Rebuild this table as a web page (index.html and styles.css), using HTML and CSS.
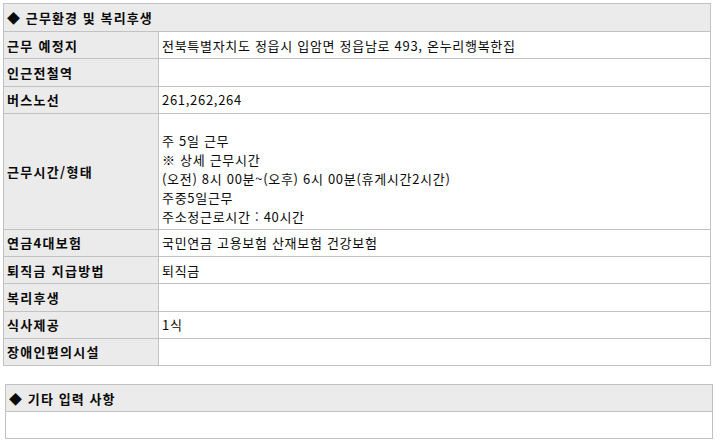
FILE: index.html
```html
<!DOCTYPE html>
<html lang="ko">
<head>
<meta charset="utf-8">
<title>근무환경 및 복리후생</title>
<link rel="stylesheet" href="styles.css">
</head>
<body>
<div class="page">
  <table class="info">
    <colgroup>
      <col class="col-label">
      <col class="col-value">
    </colgroup>
    <thead>
      <tr><th class="title" colspan="2">◆ 근무환경 및 복리후생</th></tr>
    </thead>
    <tbody>
      <tr><th class="label">근무 예정지</th><td class="value">전북특별자치도 정읍시 입암면 정읍남로 493, 온누리행복한집</td></tr>
      <tr><th class="label">인근전철역</th><td class="value"></td></tr>
      <tr><th class="label">버스노선</th><td class="value">261,262,264</td></tr>
      <tr class="tall"><th class="label">근무시간/형태</th><td class="value multi">주 5일 근무<br>※ 상세 근무시간<br>(오전) 8시 00분~(오후) 6시 00분(휴게시간2시간)<br>주중5일근무<br>주소정근로시간 : 40시간</td></tr>
      <tr><th class="label">연금4대보험</th><td class="value">국민연금 고용보험 산재보험 건강보험</td></tr>
      <tr><th class="label">퇴직금 지급방법</th><td class="value">퇴직금</td></tr>
      <tr><th class="label">복리후생</th><td class="value"></td></tr>
      <tr><th class="label">식사제공</th><td class="value">1식</td></tr>
      <tr><th class="label">장애인편의시설</th><td class="value"></td></tr>
    </tbody>
  </table>

  <table class="info extra">
    <thead>
      <tr><th class="title">◆ 기타 입력 사항</th></tr>
    </thead>
    <tbody>
      <tr><td class="value"></td></tr>
    </tbody>
  </table>
</div>
</body>
</html>
```

FILE: styles.css
```css
html, body {
  margin: 0;
  padding: 0;
  background: #ffffff;
}

body {
  font-family: "Noto Sans CJK KR", "Noto Sans", "DejaVu Sans", sans-serif;
  font-size: 13px;
  color: #0a0a0a;
}

.page {
  padding: 3px 0 0 3px;
}

.info {
  width: 708px;
  border-collapse: collapse;
  border: 1px solid #c2c2c2;
  table-layout: fixed;
}

.col-label {
  width: 155px;
}

.info th,
.info td {
  border: 1px solid #c2c2c2;
  padding: 0 0 0 3px;
  text-align: left;
  vertical-align: middle;
  line-height: 19px;
  white-space: nowrap;
}

.title {
  background: #ebebeb;
  font-weight: bold;
  letter-spacing: 1.1px;
  height: 27px;
}

.label {
  background: #ebebeb;
  font-weight: bold;
  letter-spacing: 1.3px;
  height: 26.25px;
}

.value {
  background: #ffffff;
  font-weight: normal;
  letter-spacing: 0.7px;
  height: 26.25px;
}

.tall .label {
  height: 115px;
}

.tall .multi {
  vertical-align: top;
  padding-top: 17px;
  height: 98px;
}

.extra {
  margin-top: 18px;
  margin-left: 2px;
}

.extra .title {
  height: 26px;
}

.extra .value {
  height: 26px;
}
```
